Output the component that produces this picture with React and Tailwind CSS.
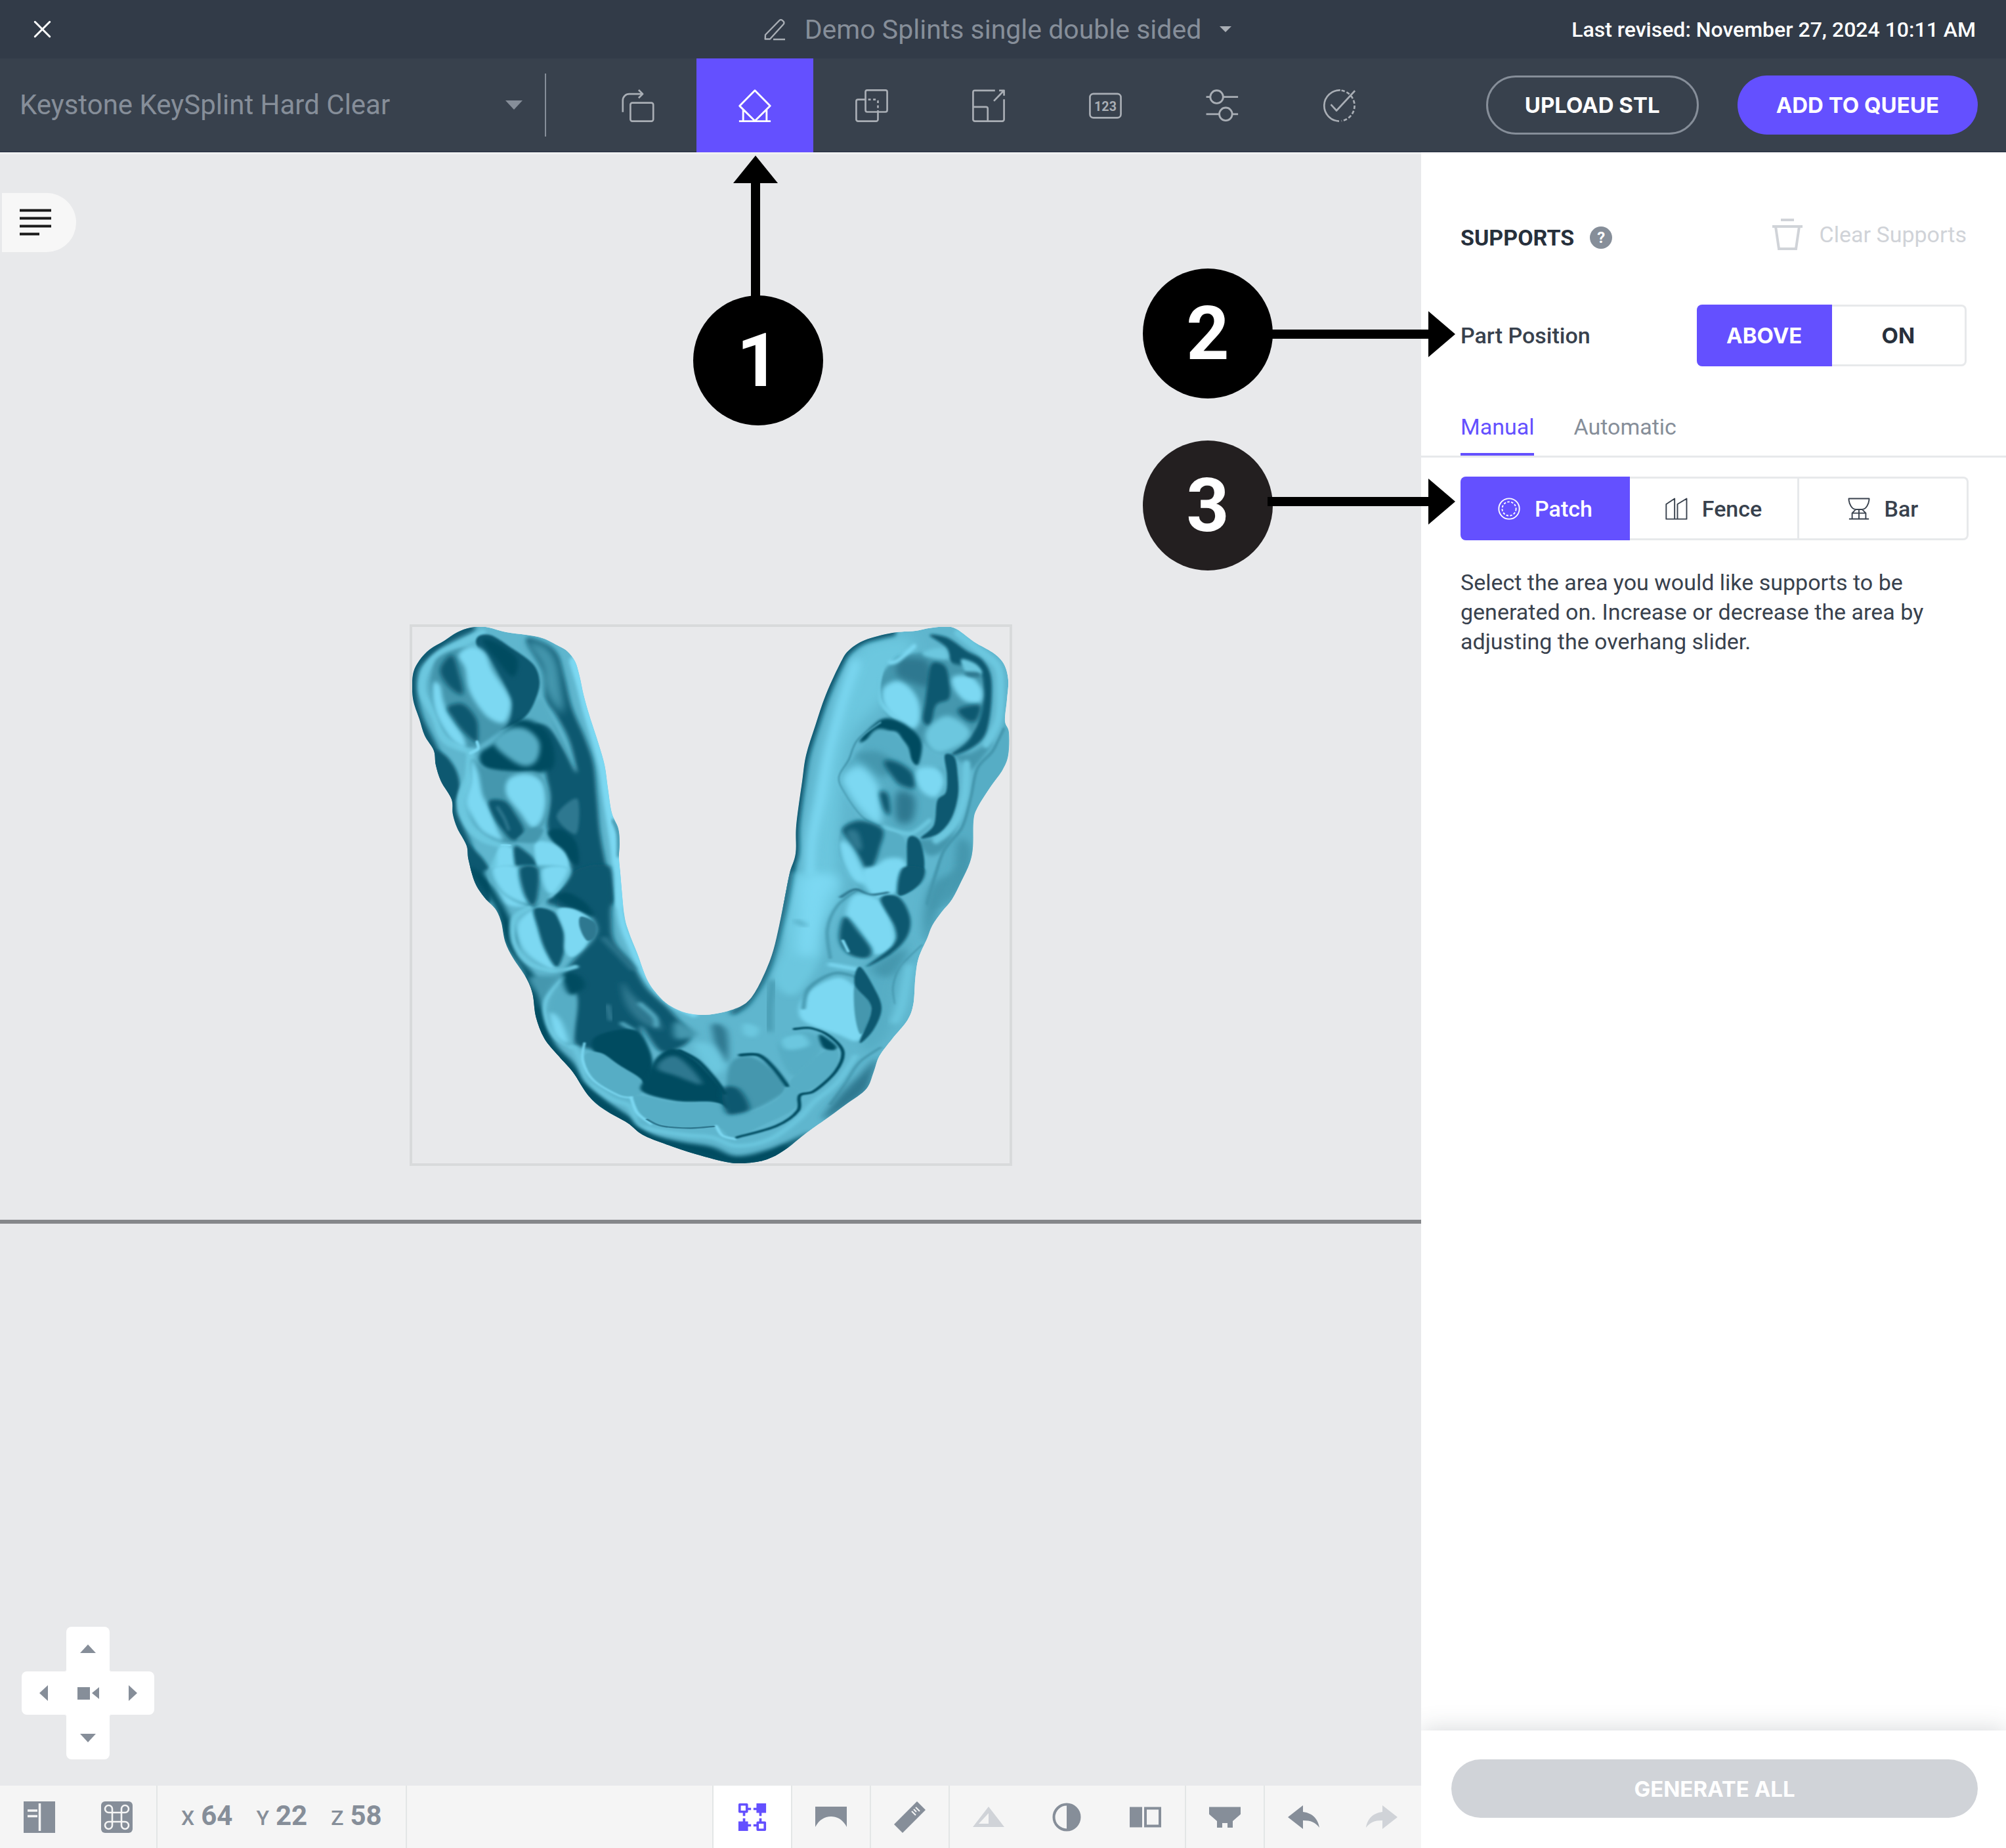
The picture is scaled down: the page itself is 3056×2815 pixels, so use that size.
import { X } from "lucide-react";

const C = {
    light: "#7bd8f2",
    soft: "#6cc7df",
    mid: "#56adc5",
    dim: "#4597ae",
    shade: "#2f7890",
    dark: "#0f5870",
    deep: "#054c61",
};

// Catmull-Rom through the points, returned as a cubic path
const smooth = (str, closed = true) => {
    const p = str.trim().split(/\s+/).map((s) => s.split(",").map(Number));
    const n = p.length;
    const at = (i) => (closed ? p[(i + n) % n] : p[Math.max(0, Math.min(n - 1, i))]);
    let d = `M${p[0][0]} ${p[0][1]}`;
    for (let i = 0; i < (closed ? n : n - 1); i++) {
        const [a, b, c, e] = [at(i - 1), at(i), at(i + 1), at(i + 2)];
        d += `C${b[0] + (c[0] - a[0]) / 6} ${b[1] + (c[1] - a[1]) / 6} ${c[0] - (e[0] - b[0]) / 6} ${c[1] - (e[1] - b[1]) / 6} ${c[0]} ${c[1]}`;
    }
    return closed ? d + "Z" : d;
};

const OUTLINE =
    "715,955 738,954 770,962 800,966 825,971 848,982 863,991 875,1007 882,1030 888,1058 897,1090 910,1130 920,1165 925,1200 931,1238 941,1262 943,1285 942,1305 944,1330 950,1393 957,1420 970,1453 985,1493 1002,1517 1020,1533 1045,1544 1073,1547 1105,1542 1133,1531 1150,1512 1167,1478 1178,1448 1187,1410 1195,1370 1203,1330 1212,1300 1213,1257 1222,1190 1228,1150 1242,1105 1258,1058 1280,1010 1293,990 1318,974 1360,963 1395,960 1422,955 1453,955 1485,977 1513,993 1530,1010 1537,1035 1535,1065 1532,1098 1538,1115 1537,1150 1528,1173 1510,1198 1490,1230 1484,1250 1483,1290 1478,1315 1465,1343 1451,1370 1435,1390 1421,1410 1413,1430 1400,1460 1395,1490 1392,1530 1383,1555 1360,1583 1340,1610 1331,1635 1320,1660 1290,1683 1260,1705 1225,1730 1200,1750 1175,1765 1150,1772 1113,1773 1060,1760 1015,1745 978,1730 955,1712 920,1692 895,1670 872,1635 850,1610 828,1583 815,1550 810,1515 800,1490 780,1460 768,1435 762,1405 753,1385 737,1368 722,1345 712,1310 709,1288 695,1262 688,1240 686,1217 670,1190 662,1165 659,1143 645,1120 637,1095 627,1063 627,1027 637,1005 653,988 675,975 695,962";

// [points, colour, blur, stroke width when it is a line]
const LEFT_ARM = [
    ["345,75 225,135 115,225 82,290 82,395 110,500 177,640 188,700 260,865 265,930 328,1075 335,1140 410,1320", C.dark, 12, 44],
    ["178,640 230,660 280,730 295,810 262,870 190,740", C.dark, 8],
    ["328,1075 380,1110 430,1180 440,1270 420,1340 350,1220", C.dark, 8],
    ["600,130 690,150 745,200 775,300 810,440 870,580 910,700 925,850 940,1020 970,1180 1000,1340 700,1340 800,1230 790,1120 700,1000 710,850 690,740 690,640 640,520 700,500 760,600 830,740 800,600 740,480 690,400 680,280", C.dark, 10],
    ["600,140 690,160 740,230 760,340 770,460 720,420 680,340 670,250", C.dim, 20],
    ["820,230 850,330 880,450 925,600 955,720 970,830 990,960 1010,1100 1030,1340", C.light, 8, 44],
    ["1000,960 1022,1020 1024,1120", C.dim, 6, 16],
    ["600,500 660,400 700,450 760,580 840,740 780,640 700,530", C.mid, 8],
    ["345,640 230,590 180,480 125,370 140,270 200,200 300,150 400,100", C.soft, 6, 34],
    ["345,640 335,760 300,870 330,970 400,1040 500,1070", C.soft, 6, 36],
    ["500,1080 460,1150 440,1240 470,1340", C.soft, 6, 30],
    ["370,140 430,108 520,160 630,240 662,320 645,400 600,480 520,530 460,520 430,300", C.dark, 5],
    ["400,130 480,150 560,220 540,300 470,230", C.deep, 10],
    ["200,210 300,170 400,180 480,300 530,420 515,520 440,580 350,625 250,580 190,480 160,360 170,270", C.dim, 8],
    ["290,200 350,160 410,190 445,270 510,370 530,430 500,510 430,490 370,420 335,350 320,260", C.light, 10],
    ["175,330 205,340 220,410 250,480 310,570 320,625 260,590 200,500 175,420", C.light, 10],
    ["205,270 260,200 295,290 310,380 250,350", C.dark, 11],
    ["240,440 310,425 370,490 380,560 370,600 310,550 265,490", C.dark, 9],
    ["390,650 460,600 560,500 660,520 720,600 720,720 600,745 480,745 400,710", C.deep, 10],
    ["450,600 520,540 600,540 660,600 650,680 600,710 530,680", C.mid, 12],
    ["350,680 420,720 560,735 650,740 700,820 700,930 660,1000 560,1060 460,1050 370,980 340,880 350,780", C.dim, 8],
    ["520,770 600,745 670,780 690,870 670,960 625,990 570,920 510,840", C.light, 9],
    ["350,680 380,740 400,840 430,900 470,1000 490,1050 400,1010 345,930 325,870 345,780", C.light, 10],
    ["430,870 500,870 550,930 590,1010 540,1050 490,1000 450,940", C.dark, 8],
    ["470,900 500,950 520,1000", C.shade, 6, 14],
    ["740,940 835,860 830,1020", C.shade, 6],
    ["700,1020 760,1000 830,1060 840,1160 790,1130", C.deep, 8],
    ["480,1080 540,1090 580,1200 620,1340 500,1340 462,1250 465,1150", C.light, 8],
    ["545,1080 610,1110 650,1160 665,1230 655,1340 600,1340 560,1220", C.dark, 8],
    ["640,1070 710,1060 780,1110 795,1200 760,1270 700,1310 660,1200", C.light, 6],
    ["560,1050 620,1000 680,1000 640,1060", C.dim, 6],
    ["345,650 380,630 375,600", C.light, 4, 14],
    ["490,1072 525,1075", C.light, 4, 14],
];

const RIGHT_ARM = [
    ["480,140 400,300 330,600 260,900 250,1340 340,1340 350,1000 400,600 560,400 700,140", C.soft, 30],
    ["430,240 370,420 310,640 270,860 230,1060 220,1340", C.light, 20, 50],
    ["100,1340 130,1200 155,1110 158,980 185,780 205,660 245,530 295,385 360,240 400,180 475,130 600,98", C.dark, 9, 34],
    ["1115,510 1133,550 1132,655 1105,735 1050,810 990,905 972,960 970,1080 955,1150 915,1240 865,1340 750,1340 830,1100 920,980 950,850 1000,700 1090,600", C.mid, 5],
    ["1110,540 1060,640 990,720 960,850 920,990 840,1090 800,1200 760,1340", C.dim, 5, 14],
    ["900,1050 880,1200 830,1340 940,1220 960,1080", C.dim, 18],
    ["880,660 960,650 1060,600 970,720 930,700", C.dim, 10],
    ["720,1050 830,1040 900,960 850,1080 770,1120", C.dim, 10],
    ["900,100 1000,180 1080,250 1095,350 1085,500 1030,610", C.soft, 8, 34],
    ["940,700 930,850 880,980 800,1050", C.soft, 8, 34],
    ["770,110 850,120 940,180 1010,220 1050,290 1055,400 1040,520 1010,590 940,640 870,655 960,560 990,480 1000,300 880,260 850,170", C.dark, 6],
    ["600,230 660,200 800,190 880,240 1000,270 1015,420 980,540 900,630 810,650 740,600 680,540 600,500 550,420 545,310", C.dim, 8],
    ["550,260 535,360 560,440 680,540", C.soft, 5, 20],
    ["560,350 640,320 715,400 725,500 690,540 620,500 560,430", C.light, 12],
    ["640,220 760,230 770,340 700,330 620,290", C.shade, 14],
    ["780,240 840,250 860,320 860,400 800,430 775,520 740,500 750,420 760,340", C.dark, 8],
    ["880,300 960,300 1010,360 1000,420 930,410 880,350", C.light, 10],
    ["915,220 980,240 1010,285 940,280", C.soft, 7],
    ["930,280 990,280 1000,300 950,300", C.shade, 6],
    ["900,450 1000,430 985,500 940,500", C.dark, 9],
    ["760,540 850,480 950,540 930,600 820,650 760,610", C.soft, 12],
    ["740,185 830,170 850,220 760,210", C.soft, 8],
    ["590,235 625,225 700,160", C.light, 7, 20],
    ["450,600 540,500 620,500 700,550 735,610 720,700 690,690 650,600 600,550", C.deep, 6],
    ["450,640 520,545 600,555 670,620 700,710 830,720 840,820 800,880 790,960 700,1030 560,990 460,930 370,810 375,730", C.mid, 6],
    ["545,510 440,590 400,680 355,760 380,830 460,940 540,985", C.dim, 4, 9],
    ["370,760 450,710 530,790 550,900 540,980 470,930 400,840", C.light, 16],
    ["430,660 520,640 600,690 560,760 480,700", C.dim, 14],
    ["560,690 620,690 690,740 700,810 640,800 600,760", C.dark, 12],
    ["540,830 580,840 590,930 560,910", C.dark, 12],
    ["620,830 700,850 690,960 620,960", C.shade, 18],
    ["720,720 800,720 835,780 800,850 740,830 710,770", C.light, 10],
    ["560,990 680,1020 770,960", C.soft, 6, 20],
    ["840,660 885,670 900,760 900,850 870,950 810,1020 730,1040 790,980 805,870 845,830 850,750", C.dark, 5],
    ["355,1040 380,980 450,960 560,1000 650,1040 670,1160 640,1280 540,1320 430,1250 360,1130", C.mid, 5],
    ["370,1000 450,960 555,1000 540,1090 520,1150 490,1210 460,1150 410,1060", C.dark, 9],
    ["390,1010 440,1010 460,1090 420,1080", C.shade, 12],
    ["360,1060 410,1080 470,1200 490,1240 430,1240 380,1160", C.light, 9],
    ["500,1220 560,1140 650,1140 660,1220 600,1290 520,1310", C.light, 9],
    ["670,1045 720,1045 745,1130 740,1210 700,1270 630,1300 665,1200", C.dark, 5],
];

const FRONT = [
    ["850,0 940,0 1050,60 1000,250 1000,400 930,560 870,480 900,300", C.soft, 12],
    ["950,20 1050,20 1020,140 1000,300 980,380 940,360 940,200", C.light, 20],
    ["935,220 960,240", C.dim, 10, 10],
    ["330,-20 420,-20 420,200 430,320 480,420 520,530 590,640 640,760 560,820 500,700 540,950 500,950 380,820 315,770 320,560 290,460 370,300 375,230 340,170 270,150 290,60", C.dark, 8],
    ["20,-20 95,155 123,320 185,490 208,670 232,770 315,935 355,1015 465,1150 500,1200 570,1245 750,1335 825,1335 905,1270 975,1190 870,1262 770,1298 700,1255 610,1232 530,1200 480,1130 410,1055 352,965 310,865 262,790 240,670 225,560 205,470 165,385 155,280 120,150 70,20", C.deep, 9],
    ["185,490 208,670 232,770 315,935 355,1015 465,1150 500,1200 570,1245 750,1335 825,1335 905,1270", C.deep, 9, 36],
    ["438,-20 448,200 478,340 525,490 590,600 650,650", C.light, 6, 22],
    ["450,500 480,560 540,650 560,720 500,680 460,600", C.shade, 10],
    ["500,600 540,660 545,700", C.mid, 6, 14],
    ["410,610 418,670", C.shade, 6, 16],
    ["450,690 480,720", C.mid, 6, 14],
    ["400,300 440,370 480,440", C.shade, 8, 16],
    ["920,-20 905,120 888,240 852,445 800,590 760,640", C.dark, 9, 18],
    ["700,700 740,720 745,850 725,860", C.shade, 10],
    ["790,690 830,710 820,750 790,740", C.soft, 8],
    ["650,790 700,790 740,880 700,920", C.soft, 12],
    ["870,500 860,620 860,720", C.dim, 10, 20],
    ["600,680 660,740 600,760", C.dim, 10],
    ["80,-20 100,70 180,150 240,120 300,-20", C.mid, 6],
    ["90,-20 160,-20 190,130 120,90", C.light, 6],
    ["165,-20 215,-20 215,100 200,150 175,90", C.dark, 6],
    ["230,-20 300,-20 262,90 235,70", C.light, 6],
    ["265,110 300,90 350,140 370,200 300,150", C.deep, 6],
    ["190,160 150,210 150,320 190,410 260,450 320,430", C.soft, 5, 18],
    ["160,230 205,170 215,250 235,350 260,440 200,390 165,320", C.light, 7],
    ["205,165 260,180 290,270 290,350 268,430 235,350 215,250", C.dark, 5],
    ["270,170 320,170 365,230 350,330 310,385 290,350 288,270", C.light, 5],
    ["335,200 375,230 375,290 352,310 332,250", C.shade, 3],
    ["190,480 260,470 290,450 250,540 230,620 215,560", C.dim, 10],
    ["290,480 240,580 240,670 265,750 310,800", C.soft, 5, 16],
    ["285,500 322,570 318,700 305,790 262,740 245,640 255,560", C.mid, 6],
    ["250,640 280,680 300,780 262,740", C.light, 8],
    ["290,460 330,470 345,520 310,560 290,520", C.deep, 8],
    ["318,800 335,860 352,950 420,1035 472,1070 505,1160 620,1200 700,1212 770,1252 860,1222 940,1130 985,1050 1050,960 1100,840", C.soft, 7, 16],
    ["370,760 420,725 490,725 530,830 530,950 500,960 440,880 375,820", C.deep, 5],
    ["345,840 390,825 440,880 505,950 500,1015 440,1020 370,950", C.mid, 3],
    ["345,780 340,860 370,950 440,1020 480,1030", C.light, 3, 7],
    ["545,850 590,805 650,850 700,930 735,1000 750,1080 700,1050 600,1045 505,1000 520,930", C.deep, 5],
    ["560,860 600,840 650,910 670,970 600,930 550,900", C.shade, 8],
    ["750,880 800,840 860,890 905,980 880,1030 800,1090 745,1040", C.dim, 6],
    ["488,1020 600,1052 722,1058 740,1110 800,1100 880,1040 915,970 945,1000 930,1080 850,1150 760,1210 715,1165 620,1170 530,1140 492,1080", C.mid, 3],
    ["475,1030 492,1100 530,1150", C.light, 3, 9],
    ["712,1160 730,1205 765,1220", C.light, 3, 9],
    ["520,1130 560,1160 640,1170 705,1162", C.shade, 2, 7],
    ["730,990 775,990 805,1080 762,1108 738,1095", C.dark, 8],
    ["780,835 830,835 870,890 910,975", C.deep, 4, 13],
    ["610,815 660,860 705,940 735,1010", C.deep, 4, 13],
    ["890,760 960,730 1010,780 970,890 925,930 890,840", C.mid, 6],
    ["895,760 950,740 970,790 910,810", C.soft, 8],
    ["920,950 1010,820 1050,815 1045,900 985,985 940,1000", C.mid, 3],
    ["930,715 980,712 1030,750 1065,820 1045,910 985,1000 945,1020 940,1090 880,1160 770,1212", C.deep, 3, 10],
    ["1000,740 1045,790 1040,812 1010,800", C.deep, 5],
    ["1120,440 1250,300 1230,430 1210,560 1190,740 1120,800", C.mid, 16],
    ["1150,430 1240,350 1220,440 1180,480", C.dim, 14],
    ["1370,0 1400,-20 1330,180 1300,320 1290,200 1310,60", C.dim, 14],
    ["1285,330 1225,430 1205,520 1210,600", C.dim, 3, 5],
    ["1250,430 1230,600 1210,680", C.soft, 10, 26],
    ["1170,800 1110,870 1070,970 1030,1060", C.dim, 4, 8],
    ["1160,850 1148,925 1130,1000 1080,1065 1010,1130 1050,1030 1110,930", C.shade, 12],
    ["1120,-20 1210,-20 1230,50 1180,110 1130,70", C.light, 8],
    ["1230,-20 1290,-20 1280,50 1220,100", C.dark, 5],
    ["1105,80 1050,150 1022,260 1030,390", C.dim, 4, 8],
    ["1060,110 1100,75 1140,100 1190,90", C.shade, 4, 10],
    ["1100,100 1170,130 1205,250 1205,340 1150,370 1110,260 1075,190", C.light, 7],
    ["1170,120 1220,110 1252,200 1245,290 1200,370 1130,430 1205,330 1210,250", C.dark, 5],
    ["1070,200 1110,270 1145,350 1130,390 1080,370 1055,300", C.dark, 7],
    ["1065,310 1080,360", C.light, 3, 9],
    ["1030,420 1100,440", C.light, 6, 16],
    ["960,560 1050,480 1110,540 1140,620 1112,765 1050,740 950,670", C.light, 6],
    ["955,620 970,530 1040,460 1110,480", C.dim, 5, 12],
    ["1100,510 1140,590 1140,660 1115,740 1098,640", C.dim, 3],
    ["1112,430 1150,520 1173,620 1150,720 1112,778 1142,650 1138,590 1098,510", C.dark, 3],
];

const Shapes = ({ list }) =>
    list.map(([pts, color, blur, width]) => (
        <path
            key={pts}
            d={smooth(pts, !width)}
            fill={width ? "none" : color}
            stroke={width ? color : "none"}
            strokeWidth={width}
            strokeLinecap="round"
            filter={`url(#blur${blur})`}
        />
    ));

const BLURS = [2, 3, 4, 5, 6, 7, 8, 9, 10, 11, 12, 13, 14, 16, 18, 20, 30];

function ArchModel() {
    return (
        <svg viewBox="626 954 913 820" className="block w-full" aria-label="Dental arch model">
            <defs>
                <clipPath id="arch">
                    <path d={smooth(OUTLINE)} />
                </clipPath>
                {BLURS.map((b) => (
                    <filter key={b} id={`blur${b}`} x="-50%" y="-50%" width="200%" height="200%">
                        <feGaussianBlur stdDeviation={b} />
                    </filter>
                ))}
            </defs>
            <g clipPath="url(#arch)">
                <path d={smooth(OUTLINE)} fill="#5fb6ce" />
                <g transform="translate(600 930) scale(.33333)">
                    <Shapes list={LEFT_ARM} />
                </g>
                <g transform="translate(1160 930) scale(.33333)">
                    <Shapes list={RIGHT_ARM} />
                </g>
                <g transform="translate(700 1330) scale(.54848 .33333)">
                    <Shapes list={FRONT} />
                </g>
            </g>
        </svg>
    );
}

const Icon = ({ size = "size-[50px]", box = 28, sw = 1.5, children }) => (
    <svg
        viewBox={`0 0 ${box} ${box}`}
        className={size}
        fill="none"
        stroke="currentColor"
        strokeWidth={sw}
        strokeLinejoin="round"
        aria-hidden="true"
    >
        {children}
    </svg>
);

const tools = [
    {
        name: "Orientation",
        icon: (
            <Icon>
                <rect x="7.5" y="11.5" width="19.5" height="15.7" rx="1.6" />
                <path d="M1 19.500V9.500a5.500 5.500 0 0 1 5.500-5.500h11.500M14.500.6l3.500 3.400-3.500 3.400" />
            </Icon>
        ),
    },
    {
        name: "Supports",
        active: true,
        icon: (
            <Icon sw={1.6}>
                <path d="M14 1 27 14.200 14 27 1 14.200ZM.5 27.200h27M4 17.500V27M24 17.500V27" />
            </Icon>
        ),
    },
    {
        name: "Duplicate",
        icon: (
            <Icon>
                <path d="M8.7 8.7H2.3A1.5 1.5 0 0 0 .8 10.2v15.5a1.5 1.5 0 0 0 1.5 1.5h15.5a1.5 1.5 0 0 0 1.5-1.5v-6.4" />
                <rect x="8.7" y=".8" width="18.5" height="18.5" rx="1.5" />
                <path d="M11 8.700h6.800a1.500 1.500 0 0 1 1.500 1.500V19" strokeDasharray="2.2 2" />
            </Icon>
        ),
    },
    {
        name: "Scale",
        icon: (
            <Icon>
                <path d="M19.500 1H2.300A1.500 1.500 0 0 0 .8 2.300v23.400a1.500 1.500 0 0 0 1.500 1.500h23.400a1.500 1.500 0 0 0 1.500-1.500V8.500M.8 15h11a1.500 1.500 0 0 1 1.500 1.500v10.700M18.500 10 27 1.200M23 1h4.200v4.500" />
            </Icon>
        ),
    },
    {
        name: "Label",
        icon: (
            <Icon>
                <rect x=".8" y="3.800" width="26.400" height="20.500" rx="3" />
                <text x="14" y="18.200" textAnchor="middle" className="text-[11px] font-bold" fill="currentColor" stroke="none">
                    123
                </text>
            </Icon>
        ),
    },
    {
        name: "Settings",
        icon: (
            <Icon sw={1.6}>
                <circle cx="9.3" cy="6.5" r="5.5" />
                <circle cx="17" cy="21.2" r="5.5" />
                <path d="M.3 6.500h3.500M14.800 6.500h12.700M.3 21.200h11.200M22.500 21.200h5" />
            </Icon>
        ),
    },
    {
        name: "Validate",
        icon: (
            <Icon>
                <path d="M15 .8A13.200 13.200 0 0 0 14 27.200" />
                <path d="M16 1a13.200 13.200 0 0 1 11.200 13A13.200 13.200 0 0 1 16 27" strokeDasharray="3 1.6" />
                <path d="m7 13 4.800 5.200L27.500 1.200" />
            </Icon>
        ),
    },
];

const viewTools = [
    {
        name: "Select",
        active: true,
        icon: (
            <Icon size="size-[44px]" box={24} sw={2}>
                <path d="M5.2 8v8M18.8 8v8M8 5.2h8M8 18.8h8" strokeDasharray="3 2" />
                <path d="M1.5 1.5h6v6h-6ZM16.5 16.5h6v6h-6Z" />
                <path d="M15.5.5h8v8h-8ZM.5 15.5h8v8h-8Z" fill="currentColor" stroke="none" />
            </Icon>
        ),
    },
    {
        name: "Build platform",
        border: true,
        icon: (
            <Icon size="size-[48px]" box={48} sw={0}>
                <path d="M0 8h48v31C42 28 34 23 24 23S6 28 0 39Z" fill="currentColor" />
            </Icon>
        ),
    },
    {
        name: "Measure",
        border: true,
        icon: (
            <Icon size="size-[50px]" box={50} sw={0}>
                <path d="M36 1 49 14 14 49 1 36Z" fill="currentColor" />
                <path d="m28 16 6 6M34 10l6 6M31 13l4 4" stroke="#f5f5f5" strokeWidth="2" />
            </Icon>
        ),
    },
    {
        name: "Overhangs",
        border: true,
        muted: true,
        icon: (
            <Icon size="size-[48px]" box={48} sw={0}>
                <path d="M24 8 48 39H0ZM24 18 9 34h15Z" fill="currentColor" fillRule="evenodd" />
            </Icon>
        ),
    },
    {
        name: "Contrast",
        icon: (
            <Icon size="size-[44px]" box={44} sw={4}>
                <circle cx="22" cy="22" r="19.5" />
                <path d="M22 2a20 20 0 0 1 0 40Z" fill="currentColor" stroke="none" />
            </Icon>
        ),
    },
    {
        name: "Compare",
        icon: (
            <Icon size="size-[48px]" box={48} sw={4}>
                <path d="M0 8.500h19v31H0Z" fill="currentColor" stroke="none" />
                <path d="M24 10.500h22v27H24Z" strokeLinejoin="miter" />
            </Icon>
        ),
    },
    {
        name: "Slicer",
        border: true,
        icon: (
            <Icon size="size-[48px]" box={48} sw={0}>
                <path d="M0 8.500h48v11L36 30v10h-8v-7h-8v7h-8V30L0 19.500Z" fill="currentColor" />
            </Icon>
        ),
    },
    {
        name: "Undo",
        border: true,
        icon: (
            <Icon size="size-[48px]" box={48} sw={0}>
                <path d="M23 6v10c16 2 23 12 25 24-6-8-13-11-25-11v13L0 24Z" fill="currentColor" />
            </Icon>
        ),
    },
    {
        name: "Redo",
        muted: true,
        icon: (
            <Icon size="size-[48px]" box={48} sw={0}>
                <path d="M25 6v10C9 18 2 28 0 40c6-8 13-11 25-11v13l23-18Z" fill="currentColor" />
            </Icon>
        ),
    },
];

const supportTypes = [
    {
        name: "Patch",
        active: true,
        icon: (
            <Icon size="size-[34px]" box={18} sw={1}>
                <circle cx="9" cy="9" r="8.3" />
                <circle cx="9" cy="9" r="5.6" strokeDasharray="1.8 1.3" />
            </Icon>
        ),
    },
    {
        name: "Fence",
        icon: (
            <Icon size="size-[34px]" box={18} sw={1}>
                <path d="M.7 17.300V5.300L7.500.8v16.500ZM7.500 17.300h9.700V.8L9.800 5.300v12" />
            </Icon>
        ),
    },
    {
        name: "Bar",
        icon: (
            <Icon size="size-[34px]" box={18} sw={1}>
                <path d="M.8.8h16.400c0 4.500-2.700 8.700-5.700 8.700h-5C3.500 9.500.8 5.300.8.800ZM1 17.200h16M3.500 17v-4.500l3-3M14.500 17v-4.500l-3-3M9 17V9.500M3.500 12.500h11" />
            </Icon>
        ),
    },
];

const Triangle = ({ d, className = "h-[14px] w-[26px]" }) => (
    <svg viewBox="0 0 26 26" preserveAspectRatio="none" className={className} aria-hidden="true">
        <path d={d} fill="currentColor" />
    </svg>
);
const UP = "M13 0 26 26H0Z";
const DOWN = "M0 0h26L13 26Z";
const LEFT = "M26 0v26L0 13Z";
const RIGHT = "M0 0v26l26-13Z";

const badge =
    "flex size-[198px] shrink-0 items-center justify-center rounded-full text-[114px] leading-none font-bold text-white";
const caps = "font-['Inter',sans-serif] text-[33px] leading-[40px] font-bold";

function ArrowCallout({ label, color, className, arrow }) {
    return (
        <div className={`absolute flex ${className}`}>
            <div className={`${badge} ${color}`}>{label}</div>
            <svg viewBox="0 0 286 70" className={`-ml-[8px] h-[70px] w-[286px] ${arrow}`} aria-hidden="true">
                <path d="M0 28h245V0l41 35-41 35V42H0Z" />
            </svg>
        </div>
    );
}

function TopBar() {
    return (
        <header>
            <div className="grid h-[89px] grid-cols-[1fr_auto_1fr] items-center bg-[#323b48] pr-[46px] pl-[42px]">
                <button aria-label="Close" className="justify-self-start text-white">
                    <X className="size-[45px]" strokeWidth={1.6} />
                </button>
                <div className="flex items-center gap-[28px] pr-[12px] text-[#868e99]">
                    <button aria-label="Rename" className="text-[#a9aeb5]">
                        <svg viewBox="0 0 34 34" className="size-[34px]" fill="none" stroke="currentColor" strokeWidth="2.4" strokeLinejoin="round">
                            <path d="M2 25 23.500 3a3 3 0 0 1 4.300 0l1.700 1.700a3 3 0 0 1 0 4.300L9 31.500H1.700ZM14 32h18" />
                        </svg>
                    </button>
                    <button className="flex items-center gap-[28px] text-[41px] leading-[48px]">
                        Demo Splints single double sided
                        <Triangle d={DOWN} className="h-[9px] w-[18px] text-[#a9aeb5]" />
                    </button>
                </div>
                <p className="justify-self-end text-[32px] leading-[40px] font-medium text-white">
                    Last revised: November 27, 2024 10:11 AM
                </p>
            </div>
            <div className="flex h-[143px] items-center border-b-2 border-[#2f3848] bg-[#38414d] pr-[43px]">
                <div className="relative flex h-[96px] w-[832px] items-center border-r-2 border-[#868e99] text-[#868e99]">
                    <select
                        aria-label="Material"
                        className="h-full w-full appearance-none bg-transparent pl-[30px] text-[42px] leading-[48px] outline-none"
                    >
                        <option>Keystone KeySplint Hard Clear</option>
                    </select>
                    <div className="pointer-events-none absolute right-[34px]">
                        <Triangle d={DOWN} />
                    </div>
                </div>
                <nav className="ml-[51px] flex h-full">
                    {tools.map((t) => (
                        <button
                            key={t.name}
                            aria-label={t.name}
                            className={`flex h-[143px] w-[178px] items-center justify-center ${
                                t.active ? "bg-[#6450ff] text-white" : "text-[#a9aeb5]"
                            }`}
                        >
                            {t.icon}
                        </button>
                    ))}
                </nav>
                <div className={`ml-auto flex gap-[59px] text-white ${caps}`}>
                    <button className="h-[90px] rounded-full border-3 border-[#868e99] px-[56px]">UPLOAD STL</button>
                    <button className="h-[90px] rounded-full bg-[#6450ff] px-[59px]">ADD TO QUEUE</button>
                </div>
            </div>
        </header>
    );
}

function CameraPad() {
    const key = "flex items-center justify-center bg-white";
    return (
        <div className="absolute bottom-[40px] left-[33px] grid grid-cols-[66px_70px_66px] grid-rows-[66px_70px_66px] text-[#868e99]">
            <button aria-label="Look up" className={`col-start-2 mx-[2px] rounded-t-[8px] ${key}`}>
                <Triangle d={UP} className="h-[13px] w-[24px]" />
            </button>
            <button aria-label="Look left" className={`col-start-1 row-start-2 my-[2px] rounded-l-[8px] ${key}`}>
                <Triangle d={LEFT} className="h-[24px] w-[13px]" />
            </button>
            <button aria-label="Reset camera" className={`row-start-2 gap-[3px] rounded-[4px] ${key}`}>
                <span className="size-[19px] bg-[#868e99]" />
                <Triangle d={LEFT} className="h-[18px] w-[11px]" />
            </button>
            <button aria-label="Look right" className={`row-start-2 my-[2px] rounded-r-[8px] ${key}`}>
                <Triangle d={RIGHT} className="h-[24px] w-[13px]" />
            </button>
            <button aria-label="Look down" className={`col-start-2 mx-[2px] rounded-b-[8px] ${key}`}>
                <Triangle d={DOWN} className="h-[13px] w-[24px]" />
            </button>
        </div>
    );
}

function StatusBar() {
    return (
        <footer className="flex h-[95px] items-stretch bg-[#f5f5f5] text-[#868e99]">
            <div className="flex items-center gap-[70px] border-r-2 border-[#e3e6e6] px-[36px]">
                <button aria-label="Layout">
                    <svg viewBox="0 0 48 48" className="size-[48px]">
                        <path d="M0 0h48v48H0Z" fill="currentColor" />
                        <path d="M24.500 3v42M6 14h15M6 22.500h15" stroke="#f5f5f5" strokeWidth="3.500" />
                    </svg>
                </button>
                <button aria-label="Shortcuts">
                    <svg viewBox="0 0 48 48" className="size-[48px]">
                        <rect width="48" height="48" rx="6" fill="currentColor" />
                        <path
                            d="M17 17v14M31 17v14M17 17h14M17 31h14M17 17h-5.500a5.500 5.500 0 1 1 5.500-5.500ZM31 17v-5.500a5.500 5.500 0 1 1 5.500 5.500ZM17 31v5.500a5.500 5.500 0 1 1-5.500-5.500ZM31 31h5.500a5.500 5.500 0 1 1-5.500 5.500Z"
                            fill="none"
                            stroke="#f5f5f5"
                            strokeWidth="2.600"
                        />
                    </svg>
                </button>
            </div>
            <dl className="flex items-center gap-[36px] border-r-2 border-[#e3e6e6] px-[36px] text-[42px] leading-[48px]">
                {[["X", 64], ["Y", 22], ["Z", 58]].map(([axis, value]) => (
                    <div key={axis} className="flex items-baseline gap-[10px]">
                        <dt className="text-[32px] font-medium">{axis}</dt>
                        <dd className="font-bold">{value}</dd>
                    </div>
                ))}
            </dl>
            <div className="ml-auto flex">
                {viewTools.map((t) => (
                    <button
                        key={t.name}
                        aria-label={t.name}
                        className={`flex w-[120px] items-center justify-center ${t.border || t.active ? "border-l-2 border-[#e3e6e6]" : ""} ${
                            t.active ? "bg-white text-[#6450ff]" : ""
                        } ${t.muted ? "text-[#d0d3d8]" : ""}`}
                    >
                        {t.icon}
                    </button>
                ))}
            </div>
        </footer>
    );
}

function SupportsPanel() {
    return (
        <aside className="flex w-[891px] shrink-0 flex-col overflow-hidden bg-white text-[34px] leading-[40px] text-[#38414d]">
            <div className="flex-1 pt-[100px]">
                <div className="flex h-[50px] items-center justify-between px-[60px]">
                    <div className="flex items-center gap-[24px] self-end">
                        <h2 className="font-bold text-[#27303c]">SUPPORTS</h2>
                        <button
                            aria-label="Help"
                            className="flex size-[34px] items-center justify-center rounded-full bg-[#868e99] text-[24px] leading-none font-bold text-white"
                        >
                            ?
                        </button>
                    </div>
                    <button className="flex items-center gap-[26px] text-[#d0d3d8]">
                        <svg viewBox="0 0 46 50" className="h-[50px] w-[46px]" fill="none" stroke="currentColor" strokeWidth="4">
                            <path d="M13 3h20M0 13h46M5 13l5 34h26l5-34" />
                        </svg>
                        Clear Supports
                    </button>
                </div>
                <div className="mt-[82px] flex items-center justify-between px-[60px]">
                    <span className="font-medium">Part Position</span>
                    <div className={`grid h-[94px] w-[411px] grid-cols-2 ${caps}`}>
                        <button className="rounded-l-[8px] bg-[#6450ff] text-white">ABOVE</button>
                        <button className="rounded-r-[8px] border-3 border-l-0 border-[#e7e9eb] text-[#27303c]">ON</button>
                    </div>
                </div>
                <div className="mt-[64px] flex h-[75px] gap-[60px] border-b-3 border-[#e7e9eb] px-[60px]">
                    <button className="border-b-4 border-[#6450ff] pb-[12px] text-[#6450ff]">Manual</button>
                    <button className="pb-[16px] text-[#868e99]">Automatic</button>
                </div>
                <div className="mt-[29px] mr-[57px] ml-[60px] grid h-[97px] grid-cols-3 font-medium">
                    {supportTypes.map((s) => (
                        <button
                            key={s.name}
                            className={`flex items-center justify-center gap-[22px] ${
                                s.active
                                    ? "rounded-l-[8px] bg-[#6450ff] text-white"
                                    : "border-3 border-l-0 border-[#e7e9eb] last:rounded-r-[8px]"
                            }`}
                        >
                            {s.icon}
                            {s.name}
                        </button>
                    ))}
                </div>
                <p className="mt-[42px] max-w-[840px] pr-[60px] pl-[60px] leading-[45px]">
                    Select the area you would like supports to be generated on. Increase or decrease the area by adjusting
                    the overhang slider.
                </p>
            </div>
            <div className="h-[179px] bg-white pt-[44px] pr-[43px] pl-[46px] shadow-[0_0_36px_rgba(56,65,77,0.22)]">
                <button disabled className={`h-[89px] w-full rounded-full bg-[#d0d3d8] text-white ${caps}`}>
                    GENERATE ALL
                </button>
            </div>
        </aside>
    );
}

export default function App() {
    return (
        <div className="relative flex min-h-screen flex-col overflow-hidden bg-[#e8e9eb] font-['Roboto',sans-serif]">
            <TopBar />
            <main className="flex flex-1">
                <div className="flex flex-1 flex-col">
                    <section className="relative flex-1 border-t-3 border-[#f0f1f2]">
                        <button
                            aria-label="Menu"
                            className="absolute top-[59px] left-[3px] flex h-[90px] w-[113px] items-center rounded-r-full bg-[#f7f7f7] pl-[27px]"
                        >
                            <svg viewBox="0 0 48 42" className="h-[42px] w-[48px]" stroke="#1a1a1a" strokeWidth="4">
                                <path d="M0 2.500h48M0 14.500h48M0 26.500h48M0 38.500h30" />
                            </svg>
                        </button>
                        <div className="absolute top-[716px] left-[624px] w-[918px] border-4 border-[#d8dadb]">
                            <ArchModel />
                        </div>
                        <div className="absolute inset-x-0 top-[1623px] h-[6px] bg-[#85878a]" />
                        <CameraPad />
                    </section>
                    <StatusBar />
                </div>
                <SupportsPanel />
            </main>

            <div className="absolute top-[237px] left-[1056px] flex flex-col">
                <svg viewBox="0 0 68 220" className="ml-[61px] h-[220px] w-[68px]" aria-hidden="true">
                    <path d="M34 0 68 42H41v178H27V42H0Z" />
                </svg>
                <div className={`${badge} -mt-[7px] bg-black`}>1</div>
            </div>
            <ArrowCallout label="2" color="bg-black" className="top-[409px] left-[1741px]" arrow="mt-[65px]" />
            <ArrowCallout label="3" color="bg-[#231f20]" className="top-[671px] left-[1741px]" arrow="mt-[58px]" />
        </div>
    );
}
